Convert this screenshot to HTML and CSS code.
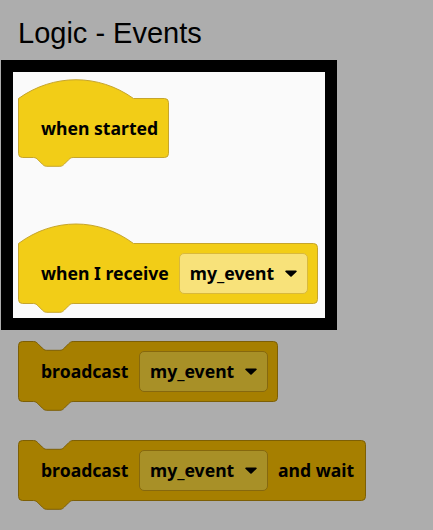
FILE: index.html
```html
<!DOCTYPE html>
<html lang="en">
<head>
<meta charset="utf-8">
<title>Logic - Events</title>
<link rel="stylesheet" href="styles.css">
</head>
<body>
  <h1 class="category-title">Logic - Events</h1>

  <div class="workspace">
    <div class="block block-hat block-started">
      <svg class="shape" width="152" height="90" viewBox="0 0 152 90">
        <path class="fill-event" d="M 0.5,19.5 c 35,-25 80,-25 115,0 H 146.5 a 4,4 0 0 1 4,4 V 74.5 a 4,4 0 0 1 -4,4 H 55.1 c -2.2,0 -3.3,1.1 -4.4,2.2 l -4.4,4.4 c -1.1,1.1 -2.2,2.2 -4.4,2.2 h -13.2 c -2.2,0 -3.3,-1.1 -4.4,-2.2 l -4.4,-4.4 c -1.1,-1.1 -2.2,-2.2 -4.4,-2.2 H 4.5 a 4,4 0 0 1 -4,-4 Z"/>
      </svg>
      <div class="row row-hat19">
        <span class="label">when started</span>
      </div>
    </div>

    <div class="block block-hat block-receive">
      <svg class="shape" width="301" height="92" viewBox="0 0 301 92">
        <path class="fill-event" d="M 0.5,20.5 c 35,-26 80,-26 115,0 H 295.5 a 4,4 0 0 1 4,4 V 76.5 a 4,4 0 0 1 -4,4 H 55.1 c -2.2,0 -3.3,1.1 -4.4,2.2 l -4.4,4.4 c -1.1,1.1 -2.2,2.2 -4.4,2.2 h -13.2 c -2.2,0 -3.3,-1.1 -4.4,-2.2 l -4.4,-4.4 c -1.1,-1.1 -2.2,-2.2 -4.4,-2.2 H 4.5 a 4,4 0 0 1 -4,-4 Z"/>
      </svg>
      <div class="row row-hat20">
        <span class="label">when I receive</span>
        <span class="dropdown dropdown-light">
          <span class="dropdown-text">my_event</span>
          <svg class="caret" width="12" height="7" viewBox="0 0 12 7"><path d="M 1,0.5 H 11 a 0.8,0.8 0 0 1 0.6,1.3 L 6.6,6.4 a 0.8,0.8 0 0 1 -1.2,0 L 0.4,1.8 A 0.8,0.8 0 0 1 1,0.5 Z"/></svg>
        </span>
      </div>
    </div>
  </div>

  <div class="palette">
    <div class="block block-stack block-broadcast">
      <svg class="shape" width="261" height="72" viewBox="0 0 261 72">
        <path class="fill-dim" d="M 0.5,4.5 a 4,4 0 0 1 4,-4 H 15.5 c 2.2,0 3.3,1.1 4.4,2.2 l 4.4,4.4 c 1.1,1.1 2.2,2.2 4.4,2.2 h 13.2 c 2.2,0 3.3,-1.1 4.4,-2.2 l 4.4,-4.4 c 1.1,-1.1 2.2,-2.2 4.4,-2.2 H 255.5 a 4,4 0 0 1 4,4 V 56.5 a 4,4 0 0 1 -4,4 H 55.1 c -2.2,0 -3.3,1.1 -4.4,2.2 l -4.4,4.4 c -1.1,1.1 -2.2,2.2 -4.4,2.2 h -13.2 c -2.2,0 -3.3,-1.1 -4.4,-2.2 l -4.4,-4.4 c -1.1,-1.1 -2.2,-2.2 -4.4,-2.2 H 4.5 a 4,4 0 0 1 -4,-4 Z"/>
      </svg>
      <div class="row">
        <span class="label label-broadcast">broadcast</span>
        <span class="dropdown dropdown-dim">
          <span class="dropdown-text">my_event</span>
          <svg class="caret" width="12" height="7" viewBox="0 0 12 7"><path d="M 1,0.5 H 11 a 0.8,0.8 0 0 1 0.6,1.3 L 6.6,6.4 a 0.8,0.8 0 0 1 -1.2,0 L 0.4,1.8 A 0.8,0.8 0 0 1 1,0.5 Z"/></svg>
        </span>
      </div>
    </div>

    <div class="block block-stack block-broadcast-wait">
      <svg class="shape" width="349" height="72" viewBox="0 0 349 72">
        <path class="fill-dim" d="M 0.5,4.5 a 4,4 0 0 1 4,-4 H 15.5 c 2.2,0 3.3,1.1 4.4,2.2 l 4.4,4.4 c 1.1,1.1 2.2,2.2 4.4,2.2 h 13.2 c 2.2,0 3.3,-1.1 4.4,-2.2 l 4.4,-4.4 c 1.1,-1.1 2.2,-2.2 4.4,-2.2 H 343.5 a 4,4 0 0 1 4,4 V 56.5 a 4,4 0 0 1 -4,4 H 55.1 c -2.2,0 -3.3,1.1 -4.4,2.2 l -4.4,4.4 c -1.1,1.1 -2.2,2.2 -4.4,2.2 h -13.2 c -2.2,0 -3.3,-1.1 -4.4,-2.2 l -4.4,-4.4 c -1.1,-1.1 -2.2,-2.2 -4.4,-2.2 H 4.5 a 4,4 0 0 1 -4,-4 Z"/>
      </svg>
      <div class="row">
        <span class="label label-broadcast">broadcast</span>
        <span class="dropdown dropdown-dim">
          <span class="dropdown-text">my_event</span>
          <svg class="caret" width="12" height="7" viewBox="0 0 12 7"><path d="M 1,0.5 H 11 a 0.8,0.8 0 0 1 0.6,1.3 L 6.6,6.4 a 0.8,0.8 0 0 1 -1.2,0 L 0.4,1.8 A 0.8,0.8 0 0 1 1,0.5 Z"/></svg>
        </span>
        <span class="label">and wait</span>
      </div>
    </div>
  </div>
</body>
</html>
```

FILE: styles.css
```css
html, body {
  margin: 0;
  padding: 0;
}

body {
  background: #adadad;
  width: 433px;
  height: 530px;
  overflow: hidden;
}

.category-title {
  margin: 0;
  padding: 17px 0 0 18px;
  height: 32px;
  font-family: "Liberation Sans", Arial, sans-serif;
  font-weight: normal;
  font-size: 29px;
  line-height: 32px;
  color: #000;
}

/* The outlined workspace holding the event hats */
.workspace {
  margin: 11px 0 0 1px;
  border: 12px solid #000;
  background: #fafafa;
  padding: 7px 0 0 5px;
  box-sizing: content-box;
  width: 307px;
  height: 239px;
}

.palette {
  padding: 11px 0 0 18px;
}

/* Blocks: an SVG outline under a flex row of label and fields */
.block {
  position: relative;
}

.shape {
  position: absolute;
  left: 0;
  top: 0;
  overflow: visible;
}

.fill-event {
  fill: #f2cd17;
  stroke: #c6a52c;
  stroke-width: 1;
}

.fill-dim {
  fill: #a67f00;
  stroke: #7d5f05;
  stroke-width: 1;
}

.row {
  position: relative;
  display: flex;
  align-items: center;
  height: 60px;
  padding-left: 23px;
  gap: 10px;
  font-family: "Noto Sans", "Open Sans", sans-serif;
  font-weight: bold;
  font-size: 17.6px;
  color: #000;
}

.block-started {
  padding-top: 19px;
}

.row-hat19 {
  height: 59px;
}

.block-receive {
  margin-top: 66px;
  padding-top: 20px;
}

.block-broadcast-wait {
  margin-top: 39px;
}

.label {
  white-space: nowrap;
}

.label-broadcast {
  width: 88px;
}

.dropdown {
  display: flex;
  align-items: center;
  justify-content: space-between;
  width: 129px;
  height: 41px;
  box-sizing: border-box;
  padding: 0 10px;
  border-radius: 5px;
  border: 1px solid;
  white-space: nowrap;
}

.dropdown-light {
  background: #f8e27a;
  border-color: #d9b93c;
}

.dropdown-dim {
  background: #a89027;
  border-color: #86680e;
}

.caret path {
  fill: #000;
}
```
